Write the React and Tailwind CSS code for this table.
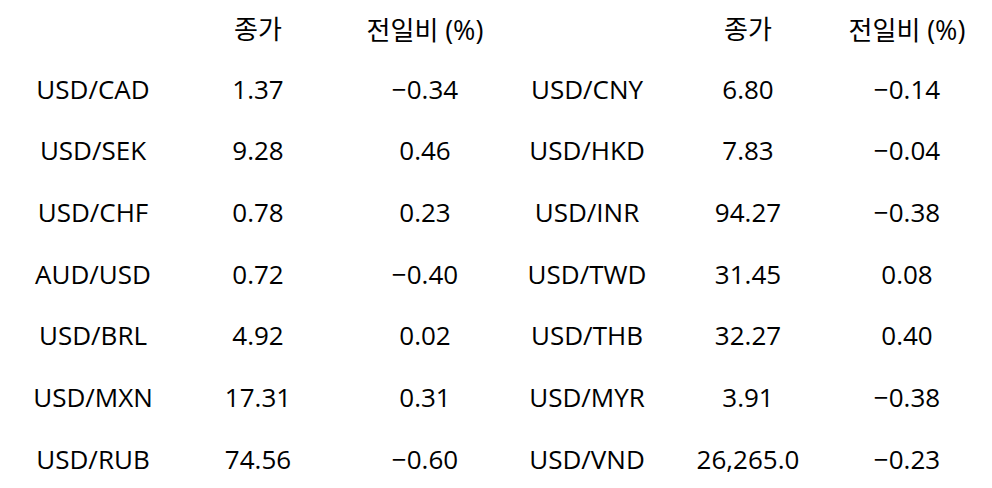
import React from 'react';

const rows = [
    ['USD/CAD', '1.37', '−0.34', 'USD/CNY', '6.80', '−0.14'],
    ['USD/SEK', '9.28', '0.46', 'USD/HKD', '7.83', '−0.04'],
    ['USD/CHF', '0.78', '0.23', 'USD/INR', '94.27', '−0.38'],
    ['AUD/USD', '0.72', '−0.40', 'USD/TWD', '31.45', '0.08'],
    ['USD/BRL', '4.92', '0.02', 'USD/THB', '32.27', '0.40'],
    ['USD/MXN', '17.31', '0.31', 'USD/MYR', '3.91', '−0.38'],
    ['USD/RUB', '74.56', '−0.60', 'USD/VND', '26,265.0', '−0.23'],
];

const cols = 'grid grid-cols-[186px_144px_190px_134px_188px_130px]';

export default function App() {
    return (
        <div className="w-[992px] h-[488px] overflow-hidden bg-white text-black text-[26px] leading-none font-['Open_Sans','Noto_Sans_CJK_KR',sans-serif]">
            <div className={`${cols} h-[58px] items-center text-center`}>
                <div></div>
                <div>종가</div>
                <div>전일비 <span className="text-[27px]">(%)</span></div>
                <div></div>
                <div>종가</div>
                <div>전일비 <span className="text-[27px]">(%)</span></div>
            </div>
            {rows.map((r) => (
                <div key={r[0]} className={`${cols} h-[61.67px] items-center text-center`}>
                    {r.map((c, i) => (
                        <div key={i}>{c}</div>
                    ))}
                </div>
            ))}
        </div>
    );
}
